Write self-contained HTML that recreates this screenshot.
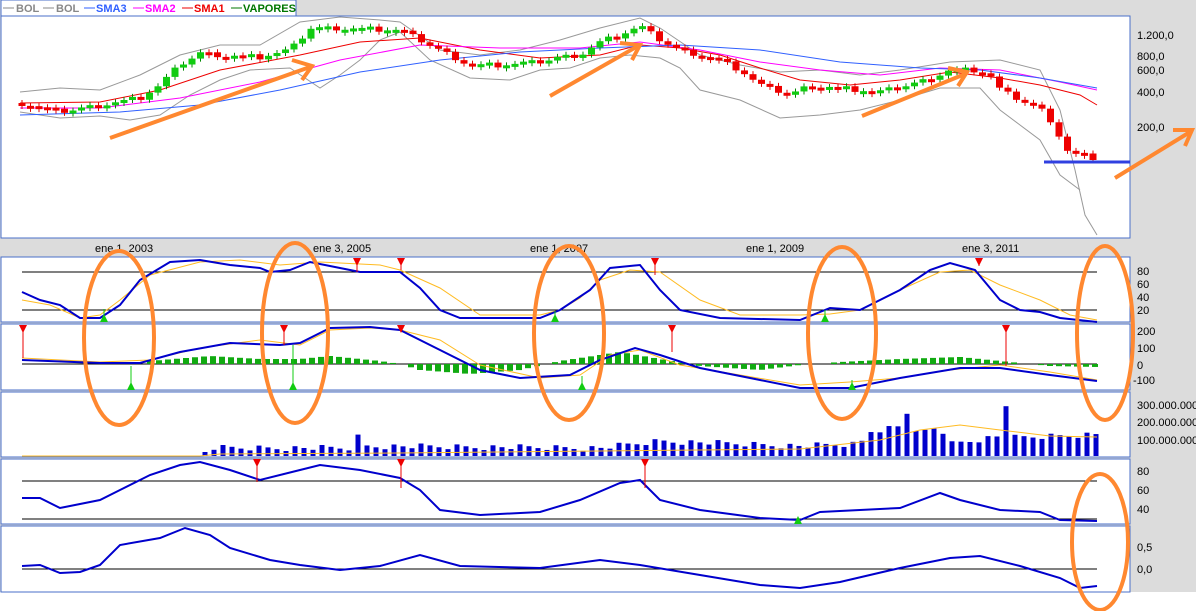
<!DOCTYPE html>
<html><head><meta charset="utf-8"><style>
body{margin:0;width:1196px;height:611px;overflow:hidden;background:#fff;font-family:"Liberation Sans",sans-serif}
svg{display:block}
text{font-family:"Liberation Sans",sans-serif;font-size:11px}
</style></head><body>
<svg id="s" width="1196" height="611" xmlns="http://www.w3.org/2000/svg">
<rect x="0" y="0" width="1196" height="611" fill="#fff"/>
<rect x="0" y="0" width="1196" height="592" fill="#dcdcdc"/>
<rect x="1" y="16" width="1129" height="222" fill="#fff" stroke="#4a6fc8"/>
<rect x="1" y="257" width="1129" height="65" fill="#fff" stroke="#4a6fc8"/>
<rect x="1" y="324" width="1129" height="66" fill="#fff" stroke="#4a6fc8"/>
<rect x="1" y="392" width="1129" height="65" fill="#fff" stroke="#4a6fc8"/>
<rect x="1" y="459" width="1129" height="65" fill="#fff" stroke="#4a6fc8"/>
<rect x="1" y="526" width="1129" height="66" fill="#fff" stroke="#4a6fc8"/>
<rect x="1" y="0" width="295" height="16" fill="#fff" stroke="#4a6fc8"/>
<g font-weight="bold" font-size="11">
<line x1="3" y1="8" x2="14" y2="8" stroke="#888"/><text x="16" y="12" fill="#888" font-weight="bold">BOL</text>
<line x1="43" y1="8" x2="54" y2="8" stroke="#888"/><text x="56" y="12" fill="#888" font-weight="bold">BOL</text>
<line x1="84" y1="8" x2="95" y2="8" stroke="#3060ff"/><text x="96" y="12" fill="#3060ff" font-weight="bold">SMA3</text>
<line x1="133" y1="8" x2="144" y2="8" stroke="#f0f"/><text x="145" y="12" fill="#f0f" font-weight="bold">SMA2</text>
<line x1="182" y1="8" x2="193" y2="8" stroke="#e00"/><text x="194" y="12" fill="#e00" font-weight="bold">SMA1</text>
<line x1="231" y1="8" x2="242" y2="8" stroke="#070"/><text x="243" y="12" fill="#070" font-weight="bold">VAPORES</text>
</g>
<g fill="#000">
<text x="1137" y="39">1.200,0</text><text x="1137" y="60">800,0</text><text x="1137" y="74">600,0</text><text x="1137" y="96">400,0</text><text x="1137" y="131">200,0</text>
<text x="1137" y="275">80</text><text x="1137" y="288">60</text><text x="1137" y="301">40</text><text x="1137" y="314">20</text>
<text x="1137" y="335">200</text><text x="1137" y="352">100</text><text x="1137" y="369">0</text><text x="1133" y="384">-100</text>
<text x="1137" y="409">300.000.000</text><text x="1137" y="426">200.000.000</text><text x="1137" y="444">100.000.000</text>
<text x="1137" y="475">80</text><text x="1137" y="494">60</text><text x="1137" y="513">40</text>
<text x="1137" y="551">0,5</text><text x="1137" y="573">0,0</text>
<text x="95" y="252">ene 1, 2003</text><text x="313" y="252">ene 3, 2005</text><text x="530" y="252">ene 1, 2007</text><text x="746" y="252">ene 1, 2009</text><text x="962" y="252">ene 3, 2011</text>
</g>
<g stroke="#000"><line x1="22" y1="272" x2="1097" y2="272"/><line x1="22" y1="310" x2="1097" y2="310"/><line x1="22" y1="364" x2="1097" y2="364"/><line x1="22" y1="481" x2="1097" y2="481"/><line x1="22" y1="519" x2="1097" y2="519"/><line x1="22" y1="569" x2="1097" y2="569"/></g>
<g id="dyn"></g>
<g fill="none" stroke="#ff8830" stroke-width="4">
<line x1="110" y1="138" x2="310" y2="67"/><polyline points="292,60 312,66 302,80"/>
<line x1="550" y1="96" x2="638" y2="46"/><polyline points="620,43 640,45 632,60"/>
<line x1="862" y1="116" x2="965" y2="74"/><polyline points="948,68 967,72 958,86"/>
<line x1="1115" y1="178" x2="1190" y2="132"/><polyline points="1173,130 1192,130 1185,146"/>
<ellipse cx="119" cy="338" rx="35" ry="87"/><ellipse cx="295" cy="333" rx="33" ry="90"/><ellipse cx="569" cy="333" rx="35" ry="87"/>
<ellipse cx="842" cy="333" rx="34" ry="86"/><ellipse cx="1105" cy="333" rx="28" ry="87"/><ellipse cx="1100" cy="542" rx="28" ry="68"/>
</g>
</svg>
<script>
(function(){
var ns="http://www.w3.org/2000/svg",g=document.getElementById("dyn");
function el(t,a){var e=document.createElementNS(ns,t);for(var k in a)e.setAttribute(k,a[k]);g.appendChild(e);return e}
function interp(p,x){if(x<=p[0][0])return p[0][1];for(var i=0;i<p.length-1;i++){if(x>=p[i][0]&&x<=p[i+1][0]){var t=(x-p[i][0])/(p[i+1][0]-p[i][0]);return p[i][1]+t*(p[i+1][1]-p[i][1]);}}return p[p.length-1][1]}
function pl(p,c,w){el("polyline",{points:p.map(function(q){return q.join(",")}).join(" "),fill:"none",stroke:c,"stroke-width":w})}
var price=[[20,103],[60,112],[100,105],[140,98],[160,85],[180,65],[200,53],[220,55],[260,57],[290,50],[300,40],[310,28],[340,28],[400,30],[420,40],[440,50],[470,65],[500,65],[540,62],[560,57],[580,55],[600,42],[620,35],[640,26],[660,40],[680,50],[720,60],[740,70],[760,85],[790,95],[810,85],[840,88],[880,92],[920,82],[950,70],[975,70],[990,75],[1000,90],[1020,100],[1040,108],[1055,125],[1065,150],[1080,155],[1095,158]];
pl([[20,92],[60,88],[100,90],[140,75],[180,55],[220,45],[260,45],[300,22],[340,17],[380,20],[400,22],[440,50],[480,55],[520,50],[560,40],[600,28],[640,18],[660,28],[700,55],[740,65],[780,72],[820,70],[860,75],[900,70],[950,62],[1000,60],[1040,70],[1060,110],[1075,170],[1085,215],[1097,235]],"#999",1);
pl([[20,112],[60,118],[100,116],[130,120],[160,115],[190,95],[220,80],[250,70],[290,68],[320,88],[340,75],[360,60],[380,40],[400,32],[430,60],[470,78],[510,80],[540,70],[570,68],[600,58],[630,55],[660,58],[680,68],[700,90],[740,100],[780,118],[820,115],[860,110],[900,100],[940,88],[980,88],[1000,110],[1020,125],[1040,140],[1060,175],[1080,190]],"#999",1);
pl([[20,103],[100,102],[160,90],[220,70],[300,55],[360,42],[420,38],[480,50],[540,58],[600,55],[640,45],[680,48],[720,55],[760,68],[800,80],[850,85],[900,80],[950,72],[1000,78],[1040,85],[1080,95],[1097,105]],"#e00",1);
pl([[20,108],[100,108],[180,98],[260,82],[340,60],[420,45],[500,48],[580,48],[640,42],[700,50],[760,62],[820,70],[880,75],[940,68],[1000,70],[1060,82],[1097,90]],"#f0f",1);
pl([[20,115],[120,112],[200,105],[280,90],[360,72],[440,60],[520,52],[600,48],[680,45],[760,50],[840,62],[920,68],[980,70],[1040,78],[1097,88]],"#3060ff",1);
var prev=interp(price,18);
for(var x=22;x<=1095;x+=8.5){var y=interp(price,x)+((Math.round(x)*13)%7-3)*0.8,up=y<prev-0.5;var ctop=Math.min(y,prev),ch=Math.max(Math.abs(y-prev),3);
el("line",{x1:x,y1:ctop-3,x2:x,y2:ctop+ch+3,stroke:up?"#080":"#d00"});
el("rect",{x:x-3.5,y:ctop,width:7,height:ch,fill:up?"#1c1":"#e00"});prev=y;}
el("line",{x1:1044,y1:162,x2:1130,y2:162,stroke:"#3040e0","stroke-width":3});
pl([[22,300],[50,305],[80,318],[100,315],[120,300],[150,275],[200,262],[240,260],[280,265],[320,262],[380,265],[400,270],[440,288],[480,315],[540,315],[560,310],[580,298],[600,280],[630,270],[660,272],[700,300],[740,315],[800,315],[830,314],[860,310],[900,290],[940,272],[970,270],[1000,285],[1040,300],[1070,315],[1097,320]],"#fb2",1);
pl([[22,292],[40,300],[60,305],[80,318],[100,318],[120,305],[140,280],[170,262],[200,260],[230,265],[260,268],[270,272],[290,270],[310,262],[340,268],[360,272],[400,272],[420,288],[440,310],[460,318],[540,318],[560,310],[590,290],[610,268],[640,265],[660,290],[680,310],[720,318],[800,320],[830,308],[860,310],[900,290],[930,270],[950,263],[975,270],[1000,300],[1020,310],[1040,312],[1060,318],[1097,322]],"#00c",2);
for(var x=150;x<1097;x+=9){var h=interp([[150,-3],[210,-8],[260,-5],[300,-5],[330,-8],[380,-3],[400,0],[420,6],[470,10],[520,6],[560,-3],[620,-12],[660,-5],[700,2],[760,6],[800,1],[840,-2],[900,-5],[960,-7],[1000,-3],[1050,2],[1097,3]],x);if(Math.abs(h)<1)continue;el("rect",{x:x-3,y:h<0?364+h:364,width:6,height:Math.abs(h),fill:"#1a1"});}
pl([[22,358],[100,362],[150,360],[200,348],[260,340],[300,345],[330,330],[370,328],[400,330],[440,340],[480,365],[540,378],[580,375],[610,355],[640,350],[680,365],[740,375],[800,385],[850,382],[900,378],[950,370],[1000,365],[1050,372],[1097,380]],"#fb2",1);
pl([[22,360],[100,363],[140,363],[180,352],[230,343],[280,345],[300,343],[330,328],[370,327],[400,330],[440,350],[480,370],[520,378],[570,375],[600,360],[635,348],[660,355],[700,368],[760,380],[800,388],[850,388],[900,378],[960,368],[1000,368],[1050,375],[1097,381]],"#00c",2);
var v=[[200,0],[210,8],[350,8],[356,28],[360,10],[600,8],[660,15],[800,10],[860,12],[870,25],[900,30],[905,60],[910,20],[940,30],[950,12],[1000,20],[1005,60],[1010,18],[1097,22]];
for(var x=205;x<1097;x+=9){var h=Math.max(2,interp(v,x)+((x*7)%11-5)*0.6);el("rect",{x:x-2.5,y:456-h,width:5,height:h,fill:"#00c"});}
pl([[22,456],[200,456],[220,454],[400,453],[600,451],[800,449],[880,440],[920,430],[960,425],[1000,430],[1050,436],[1097,437]],"#fb2",1);
pl([[22,498],[40,498],[60,508],[100,500],[120,490],[150,475],[180,465],[200,462],[230,470],[260,480],[300,470],[320,465],[360,470],[400,478],[420,490],[440,510],[480,515],[540,512],[580,500],[620,483],[640,480],[660,500],[700,510],[760,518],[800,520],[820,512],[860,510],[900,508],[940,493],[960,500],[1000,510],[1040,512],[1060,520],[1097,521]],"#00c",2);
pl([[22,566],[40,565],[60,573],[80,572],[100,565],[120,545],[160,538],[185,528],[210,535],[230,548],[270,560],[300,565],[340,570],[380,566],[420,555],[460,566],[540,568],[600,560],[640,565],[700,575],[760,585],[800,588],[840,582],[900,568],[950,558],[980,556],[1020,566],[1060,578],[1080,588],[1097,586]],"#00c",2);
function dn(x,y1,y2){el("line",{x1:x,y1:y1,x2:x,y2:y2,stroke:"#e00"});el("polygon",{points:(x-4)+","+y1+" "+(x+4)+","+y1+" "+x+","+(y1+8),fill:"#e00"});}
function upm(x,y1,y2){el("line",{x1:x,y1:y1,x2:x,y2:y2,stroke:"#1c1"});el("polygon",{points:(x-4)+","+y1+" "+(x+4)+","+y1+" "+x+","+(y1-8),fill:"#1c1"});}
dn(357,258,272);dn(401,258,270);dn(655,258,275);dn(979,258,266);
upm(104,322,309);upm(555,322,311);upm(825,322,310);
dn(23,325,358);dn(284,325,345);dn(401,325,330);dn(672,325,352);dn(1006,325,366);
upm(131,390,366);upm(293,390,345);upm(582,390,376);upm(852,390,380);
dn(257,459,482);dn(401,459,488);dn(645,459,488);upm(798,524,520);
})();
</script>
</body></html>
